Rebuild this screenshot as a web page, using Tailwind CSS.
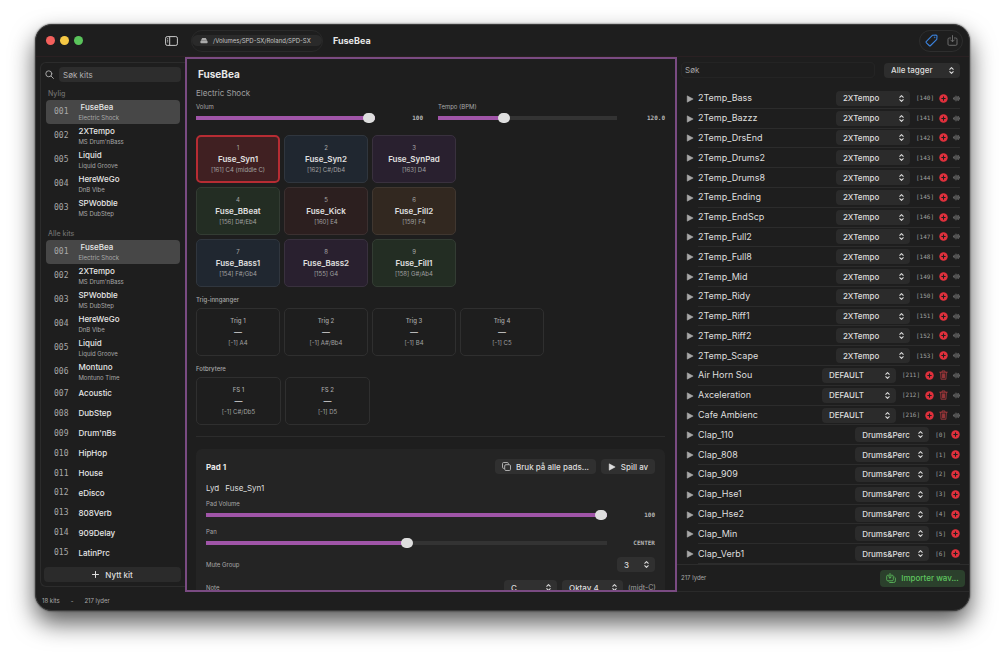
<!DOCTYPE html>
<html lang="no">
<head>
  <meta charset="UTF-8">
  <meta name="viewport" content="width=device-width, initial-scale=1.0">
  <title>FuseBea</title>
  <script src="https://cdn.jsdelivr.net/npm/@tailwindcss/browser@4"></script>
</head>
<body class="bg-white h-screen pt-6 px-[35px] pb-[46px] flex flex-col overflow-hidden font-['Inter',sans-serif] text-[8px] leading-3 text-[#dedede]">

  <!-- Icons -->
  <svg class="hidden">
    <symbol id="i-updown" viewBox="0 0 8 10"><path d="M2 3.6 4 1.6 6 3.6M2 6.4 4 8.4 6 6.4" fill="none" stroke="currentColor" stroke-width="1.2" stroke-linecap="round" stroke-linejoin="round"/></symbol>
    <symbol id="i-play" viewBox="0 0 8 8"><path d="M1.2.8v6.4L7.2 4z" fill="currentColor" stroke="currentColor" stroke-width=".5" stroke-linejoin="round"/></symbol>
    <symbol id="i-add" viewBox="0 0 10 10"><circle cx="5" cy="5" r="4.7" fill="#e0303c"/><path d="M5 3.1v3.8M3.1 5h3.8" stroke="#1e1e1e" stroke-width="1.2" stroke-linecap="round"/></symbol>
    <symbol id="i-wave" viewBox="0 0 8 8"><path d="M.6 3.4v1.2M2 2.5v3M3.4 1.2v5.6M4.7 2.2v3.6M6 1.6v4.8M7.4 3.3v1.4" stroke="currentColor" stroke-width=".8" stroke-linecap="round"/></symbol>
    <symbol id="i-trash" viewBox="0 0 10 11"><path d="M.8 2.4h8.4M3.4 2.2V1h3.2v1.2M1.8 2.6l.5 7.6h5.4l.5-7.6M3.8 4.2l.1 4.4M5 4.2v4.4M6.2 4.2l-.1 4.4" fill="none" stroke="currentColor" stroke-width=".9" stroke-linecap="round" stroke-linejoin="round"/></symbol>
  </svg>

  <div class="flex-1 min-h-0 flex flex-col bg-[#1e1e1e] rounded-[17px] overflow-hidden shadow-[0_0_2px_rgba(0,0,0,0.7),0_12px_24px_rgba(0,0,0,0.65)] border border-[#3a3a3a]">

    <!-- Toolbar -->
    <header class="h-8 shrink-0 flex items-center pl-[10px] pr-1.5 border-b border-[#2a2022]">
      <div class="flex gap-[5px]">
        <span class="size-[9px] rounded-full bg-[#f4605c]"></span>
        <span class="size-[9px] rounded-full bg-[#f6c844]"></span>
        <span class="size-[9px] rounded-full bg-[#5ac45b]"></span>
      </div>
      <button aria-label="Sidepanel" class="ml-[82px]">
        <svg class="w-[13px] h-[10px] text-[#c9c9c9]" viewBox="0 0 13 10" fill="none" stroke="currentColor"><rect x=".6" y=".6" width="11.8" height="8.8" rx="1.6"/><path d="M4.7.8v8.4"/><path d="M2 2.7h1.2M2 4.3h1.2M2 5.9h1.2" stroke-width=".8"/></svg>
      </button>
      <div class="ml-[13px] h-[22px] w-[132px] flex items-center rounded-full border border-[#2a2a2a]">
        <div class="h-[11px] w-full flex items-center gap-[5px] pl-2 rounded-full bg-[#2a2a2a] text-[6px] text-[#c4c4c4]">
          <svg class="w-2 h-[7px] shrink-0 text-[#aaa]" viewBox="0 0 8 7" fill="currentColor"><path d="M2.2 1h3.6l1.5 2.7H.7z"/><rect x=".4" y="3.9" width="7.2" height="2.3" rx=".7"/></svg>
          <span class="whitespace-nowrap">/Volumes/SPD-SX/Roland/SPD-SX</span>
        </div>
      </div>
      <h1 class="ml-[10px] text-[9px] font-bold text-[#e6e6e6]">FuseBea</h1>
      <div class="ml-auto h-[22px] w-11 flex items-center justify-center gap-[9px] rounded-full border border-[#2e2e2e]">
        <button aria-label="Tagger"><svg class="size-[13px] text-[#3b82dc]" viewBox="0 0 13 13" fill="none" stroke="currentColor" stroke-linejoin="round"><path d="M7.6 1.2 11 1.1q1 0 1 1L11.8 5.3 5.6 11.5q-.7.7-1.4 0L1.4 8.8q-.7-.7 0-1.4z" stroke-width="1.1"/><circle cx="9.7" cy="3.3" r=".5" fill="currentColor" stroke-width=".4"/></svg></button>
        <button aria-label="Importer"><svg class="size-[11px] text-[#6b6b6b]" viewBox="0 0 11 11" fill="none" stroke="currentColor" stroke-linecap="round" stroke-linejoin="round"><path d="M3.6 3H2.2Q1 3 1 4.2v4.9q0 1.2 1.2 1.2h6.6q1.2 0 1.2-1.2V4.2Q10 3 8.8 3H7.4M5.5.6v6M3.6 4.9l1.9 1.9 1.9-1.9"/></svg></button>
      </div>
    </header>

    <div class="flex-1 min-h-0 flex">

      <!-- Kits -->
      <aside class="w-[149px] shrink-0 pt-[5px] pb-[5px] pl-1 flex">
        <div class="flex-1 min-w-0 min-h-0 flex flex-col border border-r-0 border-[#2c2c2c] rounded-l-md pt-1 pb-1 pl-[3px] pr-1">
          <div class="flex items-center gap-[5px] pl-px">
            <svg class="size-[9px] shrink-0 text-[#a5a5a5]" viewBox="0 0 9 9" fill="none" stroke="currentColor" stroke-linecap="round"><circle cx="3.8" cy="3.8" r="3"/><path d="m6.1 6.1 2.3 2.3"/></svg>
            <input type="text" aria-label="Søk kits" placeholder="Søk kits" class="flex-1 min-w-0 h-[15px] px-1 rounded bg-[#2d2d2d] placeholder-[#b0b0b0] outline-none">
          </div>
          <h2 class="mt-[6px] pl-1 text-[7px] font-medium text-[#6e6e6e]">Nylig</h2>
          <ul id="recentKits" class="flex flex-col"></ul>
          <h2 class="mt-2 pl-1 text-[7px] font-medium text-[#6e6e6e]">Alle kits</h2>
          <ul id="allKits" class="flex-1 min-h-0 flex flex-col"></ul>
          <button class="mt-1 h-[15px] shrink-0 flex items-center justify-center gap-1.5 rounded bg-[#2b2b2b] font-medium">
            <svg class="size-[7px]" viewBox="0 0 7 7" stroke="currentColor" stroke-linecap="round"><path d="M3.5.5v6M.5 3.5h6"/></svg>
            Nytt kit
          </button>
        </div>
      </aside>

      <!-- Kit editor -->
      <main class="flex-1 min-w-0 overflow-hidden border-2 border-[#7a4b82] pl-[9px] pr-[10px] pt-2">
        <h2 class="pl-0.5 text-[10px] leading-[14px] font-bold text-[#e8e8e8]">FuseBea</h2>
        <p class="mt-1.5 text-[#a0a0a0]">Electric Shock</p>

        <div class="mt-[2px] grid grid-cols-2 gap-[15px]">
          <div>
            <label for="volum" class="block text-[6px] text-[#a8a8a8]">Volum</label>
            <div class="flex items-center">
              <input id="volum" type="range" min="0" max="100" value="100" class="slider">
              <output for="volum" class="w-12 text-right font-['DejaVu_Sans_Mono',monospace] text-[6px] leading-[10px] font-bold text-[#b5b5b5]">100</output>
            </div>
          </div>
          <div>
            <label for="tempo" class="block text-[6px] text-[#a8a8a8]">Tempo (BPM)</label>
            <div class="flex items-center">
              <input id="tempo" type="range" min="20" max="300" value="120" class="slider">
              <output for="tempo" class="w-12 text-right font-['DejaVu_Sans_Mono',monospace] text-[6px] leading-[10px] font-bold text-[#b5b5b5]">120.0</output>
            </div>
          </div>
        </div>

        <div id="pads" class="mt-3 grid grid-cols-[repeat(3,84px)] gap-1"></div>

        <h3 class="mt-[7px] text-[6px] font-medium text-[#a8a8a8]">Trig-innganger</h3>
        <div id="trigs" class="mt-[2px] grid grid-cols-[repeat(4,84px)] gap-1"></div>

        <h3 class="mt-[7px] text-[6px] font-medium text-[#a8a8a8]">Fotbrytere</h3>
        <div id="switches" class="mt-[2px] grid grid-cols-[repeat(2,85px)] gap-1"></div>

        <hr class="mt-[11px] border-[#2c2c2c]">

        <section class="mt-3 rounded-md bg-[#242424] px-[10px] pt-[10px] pb-8">
          <div class="flex items-center gap-[5px]">
            <h3 class="flex-1 font-bold text-[#e8e8e8]">Pad 1</h3>
            <button class="h-[15px] w-[101px] flex items-center justify-center gap-[5px] rounded bg-[#303030] font-medium">
              <svg class="size-[9px] text-[#bbb]" viewBox="0 0 9 9" fill="none" stroke="currentColor" stroke-width=".9"><rect x="2.7" y="2.7" width="5.8" height="5.8" rx="1.2"/><path d="M2.5 6.4h-.8Q.5 6.4.5 5.2V1.7Q.5.5 1.7.5h3.5q1.2 0 1.2 1.2v.8"/></svg>
              Bruk på alle pads...
            </button>
            <button class="h-[15px] w-[54px] flex items-center justify-center gap-[5px] rounded bg-[#303030] font-medium">
              <svg class="size-2"><use href="#i-play"/></svg>
              Spill av
            </button>
          </div>
          <p class="mt-2 flex gap-[6px]"><span>Lyd</span><span>Fuse_Syn1</span></p>
          <label for="padVolume" class="mt-[4px] block text-[6px] text-[#a8a8a8]">Pad Volume</label>
          <div class="flex items-center">
            <input id="padVolume" type="range" min="0" max="100" value="100" class="slider">
            <output for="padVolume" class="w-12 text-right font-['DejaVu_Sans_Mono',monospace] text-[6px] leading-[10px] font-bold text-[#b5b5b5]">100</output>
          </div>
          <label for="pan" class="mt-[6px] block text-[6px] text-[#a8a8a8]">Pan</label>
          <div class="flex items-center">
            <input id="pan" type="range" min="0" max="100" value="50" class="slider">
            <output for="pan" class="w-12 text-right font-['DejaVu_Sans_Mono',monospace] text-[6px] leading-[10px] font-bold text-[#b5b5b5]">CENTER</output>
          </div>
          <div class="mt-[9px] flex items-center justify-between">
            <label for="mute" class="text-[6px] text-[#a8a8a8]">Mute Group</label>
            <div class="relative w-[38px]">
              <select id="mute" class="block w-full h-[15px] pl-[7px] appearance-none rounded bg-[#303030] font-medium"><option>3</option></select>
              <svg class="absolute right-[5px] top-[3px] w-[7px] h-[9px] pointer-events-none"><use href="#i-updown"/></svg>
            </div>
          </div>
          <div class="mt-2 flex items-center gap-[5px]">
            <label for="note" class="flex-1 text-[6px] text-[#a8a8a8]">Note</label>
            <div class="relative w-[53px]">
              <select id="note" class="block w-full h-[15px] pl-[7px] appearance-none rounded bg-[#303030] font-medium"><option>C</option></select>
              <svg class="absolute right-[5px] top-[3px] w-[7px] h-[9px] pointer-events-none"><use href="#i-updown"/></svg>
            </div>
            <div class="relative w-[61px]">
              <select aria-label="Oktav" class="block w-full h-[15px] pl-[7px] appearance-none rounded bg-[#303030] font-medium"><option>Oktav 4</option></select>
              <svg class="absolute right-[5px] top-[3px] w-[7px] h-[9px] pointer-events-none"><use href="#i-updown"/></svg>
            </div>
            <span class="w-[27px] text-right whitespace-nowrap text-[7px] text-[#a0a0a0]">(midt-C)</span>
          </div>
        </section>
      </main>

      <!-- Sounds -->
      <aside class="w-[292px] shrink-0 flex flex-col border-b border-[#2a2a2a]">
        <div class="flex items-center justify-between pt-[5px] pl-1 pr-[9px]">
          <input type="text" aria-label="Søk" placeholder="Søk" class="w-[194px] h-4 px-[3px] rounded border border-[#242424] placeholder-[#a5a5a5] outline-none">
          <div class="relative w-[76px]">
            <select aria-label="Alle tagger" class="block w-full h-[15px] pl-[7px] appearance-none rounded bg-[#2d2d2d] font-medium"><option>Alle tagger</option></select>
            <svg class="absolute right-[5px] top-[3px] w-[7px] h-[9px] pointer-events-none"><use href="#i-updown"/></svg>
          </div>
        </div>
        <ul id="sounds" class="mt-[11px] flex-1 min-h-0 grid auto-rows-fr pl-[9px] pr-[9px]"></ul>
        <div class="h-[27px] shrink-0 flex items-center justify-between border-t border-[#2c2c2c] pl-1 pr-1">
          <span class="text-[6px] text-[#a8a8a8]">217 lyder</span>
          <button class="h-[17px] w-[85px] flex items-center justify-center gap-[5px] rounded bg-[#2b402c] font-medium text-[#5fc45f]">
            <svg class="size-[10px]" viewBox="0 0 10 10" fill="none" stroke="currentColor" stroke-width=".8" stroke-linecap="round" stroke-linejoin="round"><path d="M3 2.2H1.8Q.7 2.2.7 3.3v3.4q0 1.1 1.1 1.1h4.4q1.1 0 1.1-1.1V3.3q0-1.1-1.1-1.1H5M4 .5v4.6M2.6 3.8 4 5.2l1.4-1.4M8.8 4.2q.6.4.6 1v2.6q0 1.7-1.7 1.7H4q-.7 0-1.1-.5"/></svg>
            Importer wav...
          </button>
        </div>
      </aside>
    </div>

    <!-- Status bar -->
    <footer class="h-[18px] shrink-0 flex items-center gap-[11px] pl-[6px] text-[6px] text-[#a8a8a8]">
      <span>18 kits</span><span>-</span><span>217 lyder</span>
    </footer>
  </div>

  <script>
    const recent = [
      ["001", "FuseBea", "Electric Shock"],
      ["002", "2XTempo", "MS Drum'nBass"],
      ["005", "Liquid", "Liquid Groove"],
      ["004", "HereWeGo", "DnB Vibe"],
      ["003", "SPWobble", "MS DubStep"],
    ];
    const kits = [
      ["001", "FuseBea", "Electric Shock"],
      ["002", "2XTempo", "MS Drum'nBass"],
      ["003", "SPWobble", "MS DubStep"],
      ["004", "HereWeGo", "DnB Vibe"],
      ["005", "Liquid", "Liquid Groove"],
      ["006", "Montuno", "Montuno Time"],
      ["007", "Acoustic"], ["008", "DubStep"], ["009", "Drum'nBs"],
      ["010", "HipHop"], ["011", "House"], ["012", "eDisco"],
      ["013", "808Verb"], ["014", "909Delay"], ["015", "LatinPrc"],
    ];
    const pads = [
      ["1", "Fuse_Syn1", "[161] C4 (middle C)", "bg-[#402022] border-2 border-[#b72c33]"],
      ["2", "Fuse_Syn2", "[162] C#/Db4", "bg-[#202730] border border-[#30363e]"],
      ["3", "Fuse_SynPad", "[163] D4", "bg-[#29202f] border border-[#39313e]"],
      ["4", "Fuse_BBeat", "[156] D#/Eb4", "bg-[#232d23] border border-[#333c33]"],
      ["5", "Fuse_Kick", "[160] E4", "bg-[#2c1f1f] border border-[#3b3030]"],
      ["6", "Fuse_Fill2", "[159] F4", "bg-[#322820] border border-[#403730]"],
      ["7", "Fuse_Bass1", "[154] F#/Gb4", "bg-[#202730] border border-[#30363e]"],
      ["8", "Fuse_Bass2", "[155] G4", "bg-[#29202f] border border-[#39313e]"],
      ["9", "Fuse_Fill1", "[158] G#/Ab4", "bg-[#232d23] border border-[#333c33]"],
    ];
    const trigs = [["Trig 1", "[-1] A4"], ["Trig 2", "[-1] A#/Bb4"], ["Trig 3", "[-1] B4"], ["Trig 4", "[-1] C5"]];
    const switches = [["FS 1", "[-1] C#/Db5"], ["FS 2", "[-1] D5"]];

    // name, tag, number
    const sounds = [
      ["2Temp_Bass", "2XTempo", 140], ["2Temp_Bazzz", "2XTempo", 141], ["2Temp_DrsEnd", "2XTempo", 142],
      ["2Temp_Drums2", "2XTempo", 143], ["2Temp_Drums8", "2XTempo", 144], ["2Temp_Ending", "2XTempo", 145],
      ["2Temp_EndScp", "2XTempo", 146], ["2Temp_Full2", "2XTempo", 147], ["2Temp_Full8", "2XTempo", 148],
      ["2Temp_Mid", "2XTempo", 149], ["2Temp_Ridy", "2XTempo", 150], ["2Temp_Riff1", "2XTempo", 151],
      ["2Temp_Riff2", "2XTempo", 152], ["2Temp_Scape", "2XTempo", 153],
      ["Air Horn Sou", "DEFAULT", 211], ["Axceleration", "DEFAULT", 212], ["Cafe Ambienc", "DEFAULT", 216],
      ["Clap_110", "Drums&amp;Perc", 0], ["Clap_808", "Drums&amp;Perc", 1], ["Clap_909", "Drums&amp;Perc", 2],
      ["Clap_Hse1", "Drums&amp;Perc", 3], ["Clap_Hse2", "Drums&amp;Perc", 4], ["Clap_Min", "Drums&amp;Perc", 5],
      ["Clap_Verb1", "Drums&amp;Perc", 6],
    ];

    function kitRow([no, name, sub], i) {
      return `<li class="${sub ? "h-6 shrink-0" : "flex-1 min-h-0"} ml-[2px] mr-px flex items-center gap-[10px] pl-2 ${i === 0 ? "rounded bg-[#474747]" : ""}">
        <span class="font-['DejaVu_Sans_Mono',monospace] text-[8px] text-[#a8a8a8]">${no}</span>
        <span>
          <span class="block leading-[11px] font-medium text-[#e6e6e6] ${i === 0 ? "pl-0.5" : ""}">${name}</span>
          ${sub ? `<span class="block text-[6px] leading-[9px] text-[#a8a8a8]">${sub}</span>` : ""}
        </span>
      </li>`;
    }

    function padCell([no, name, note, look]) {
      return `<button class="h-12 rounded-[5px] flex flex-col items-center justify-center ${look}">
        <span class="text-[6px] leading-[10px] text-[#a8a8a8]">${no}</span>
        <span class="leading-3 font-semibold text-[#e0e0e0]">${name}</span>
        <span class="text-[6px] leading-[10px] text-[#a0a0a0]">${note}</span>
      </button>`;
    }

    function trigCell([name, note]) {
      return `<button class="h-12 rounded-[5px] border border-[#2f2f2f] flex flex-col items-center justify-center">
        <span class="text-[6px] leading-[10px] font-medium text-[#a8a8a8]">${name}</span>
        <span class="leading-3 font-semibold text-[#c8c8c8]">—</span>
        <span class="text-[6px] leading-[10px] text-[#a0a0a0]">${note}</span>
      </button>`;
    }

    function soundRow([name, tag, no]) {
      const isDefault = tag === "DEFAULT";
      const hasWave = no > 100;
      return `<li class="flex items-center min-h-0">
        <button aria-label="Spill ${name}" class="w-[12px] shrink-0 text-[#a8a8a8]"><svg class="size-2"><use href="#i-play"/></svg></button>
        <div class="flex-1 h-full flex items-center border-b border-[#2c2c2c]">
          <span class="flex-1 text-[9px]">${name}</span>
          <div class="relative w-[74px] mr-[6px]">
            <select aria-label="Tagg for ${name}" class="block w-full h-[15px] pl-[7px] appearance-none rounded bg-[#2b2b2b] font-medium"><option>${tag}</option></select>
            <svg class="absolute right-[5px] top-[3px] w-[7px] h-[9px] pointer-events-none"><use href="#i-updown"/></svg>
          </div>
          <span class="font-['DejaVu_Sans_Mono',monospace] text-[6px] text-[#a0a0a0]">[${no}]</span>
          <button aria-label="Legg til ${name}" class="ml-[5px]"><svg class="size-[9px]"><use href="#i-add"/></svg></button>
          ${isDefault ? `<button aria-label="Slett ${name}" class="ml-[5px] text-[#b03a3e]"><svg class="w-[9px] h-[10px]"><use href="#i-trash"/></svg></button>` : ""}
          ${hasWave ? `<svg class="ml-[5px] size-[7px] text-[#858585]"><use href="#i-wave"/></svg>` : ""}
        </div>
      </li>`;
    }

    document.getElementById("recentKits").innerHTML = recent.map(kitRow).join("");
    document.getElementById("allKits").innerHTML = kits.map(kitRow).join("");
    document.getElementById("pads").innerHTML = pads.map(padCell).join("");
    document.getElementById("trigs").innerHTML = trigs.map(trigCell).join("");
    document.getElementById("switches").innerHTML = switches.map(trigCell).join("");
    document.getElementById("sounds").innerHTML = sounds.map(soundRow).join("");

    // sliders: filled part of the track follows the value
    const sliderLook = "flex-1 min-w-0 h-[10px] appearance-none bg-no-repeat bg-center bg-[length:100%_4px] outline-none [&::-webkit-slider-thumb]:appearance-none [&::-webkit-slider-thumb]:w-3 [&::-webkit-slider-thumb]:h-[10px] [&::-webkit-slider-thumb]:rounded-full [&::-webkit-slider-thumb]:bg-[#dedede]";
    document.querySelectorAll(".slider").forEach(function (el) {
      el.className = sliderLook;
      const paint = function () {
        const pct = (el.value - el.min) / (el.max - el.min) * 100;
        el.style.backgroundImage = `linear-gradient(to right, #a055a8 ${pct}%, #333333 ${pct}%)`;
      };
      el.addEventListener("input", paint);
      paint();
    });
  </script>
</body>
</html>
